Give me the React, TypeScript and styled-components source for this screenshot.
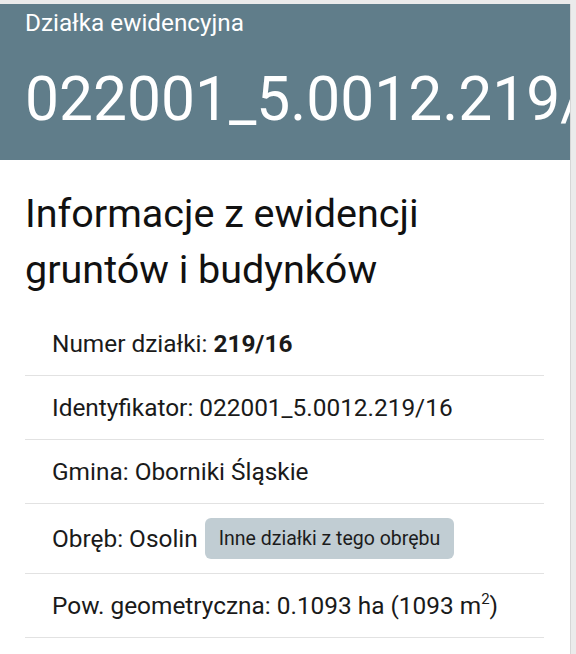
import React from "react";
import styled, { createGlobalStyle } from "styled-components";

const Global = createGlobalStyle`
  html, body {
    margin: 0;
    padding: 0;
    background: #ebebeb;
    font-family: Roboto, "Noto Sans", "Liberation Sans", sans-serif;
  }
  * { box-sizing: border-box; }
`;

const Page = styled.div`
  width: 576px;
  height: 654px;
  padding-top: 4px;
  overflow: hidden;
  background: #ebebeb;
`;

const Card = styled.main`
  width: 571px;
  min-height: 650px;
  background: #ffffff;
  border-right: 1px solid #d6d6d6;
`;

const Header = styled.header`
  background: #607d8a;
  color: #ffffff;
  padding: 3px 0 25px 25px;
  overflow: hidden;
  white-space: nowrap;
`;

const Kicker = styled.div`
  font-size: 24.3px;
  line-height: 32px;
  font-weight: 400;
`;

const ParcelId = styled.h1`
  margin: 26px 0 0;
  font-size: 60.5px;
  line-height: 70px;
  font-weight: 400;
`;

const Body = styled.section`
  padding: 26px 26px 0 25px;
`;

const Title = styled.h2`
  margin: 0 0 14px;
  font-size: 39.5px;
  line-height: 56px;
  font-weight: 400;
  color: #111;
`;

const List = styled.ul`
  list-style: none;
  margin: 0;
  padding: 0;
`;

const Row = styled.li`
  display: flex;
  align-items: center;
  gap: 7px;
  padding: 14px 0 14px 27px;
  min-height: 64px;
  border-bottom: 1px solid #e2e2e2;
  font-size: 24.4px;
  line-height: 35px;
  color: #1a1a1a;
`;

const Strong = styled.b`
  font-weight: 700;
`;

const Chip = styled.button`
  height: 41px;
  padding: 0 14px;
  border: none;
  border-radius: 6px;
  background: #c1cdd3;
  color: #1c1c1c;
  font-family: inherit;
  font-size: 19.5px;
  line-height: 41px;
  cursor: pointer;
`;

const Sup = styled.sup`
  font-size: 15px;
  line-height: 0;
  vertical-align: 10px;
`;

export default function App() {
  return (
    <Page>
      <Global />
      <Card>
        <Header>
          <Kicker>Działka ewidencyjna</Kicker>
          <ParcelId>022001_5.0012.219/16</ParcelId>
        </Header>
        <Body>
          <Title>
            Informacje z ewidencji
            <br />
            gruntów i budynków
          </Title>
          <List>
            <Row>
              <span>
                Numer działki: <Strong>219/16</Strong>
              </span>
            </Row>
            <Row>Identyfikator: 022001_5.0012.219/16</Row>
            <Row>Gmina: Oborniki Śląskie</Row>
            <Row>
              <span>Obręb: Osolin</span>
              <Chip>Inne działki z tego obrębu</Chip>
            </Row>
            <Row>
              <span>
                Pow. geometryczna: 0.1093 ha (1093 m<Sup>2</Sup>)
              </span>
            </Row>
          </List>
        </Body>
      </Card>
    </Page>
  );
}
